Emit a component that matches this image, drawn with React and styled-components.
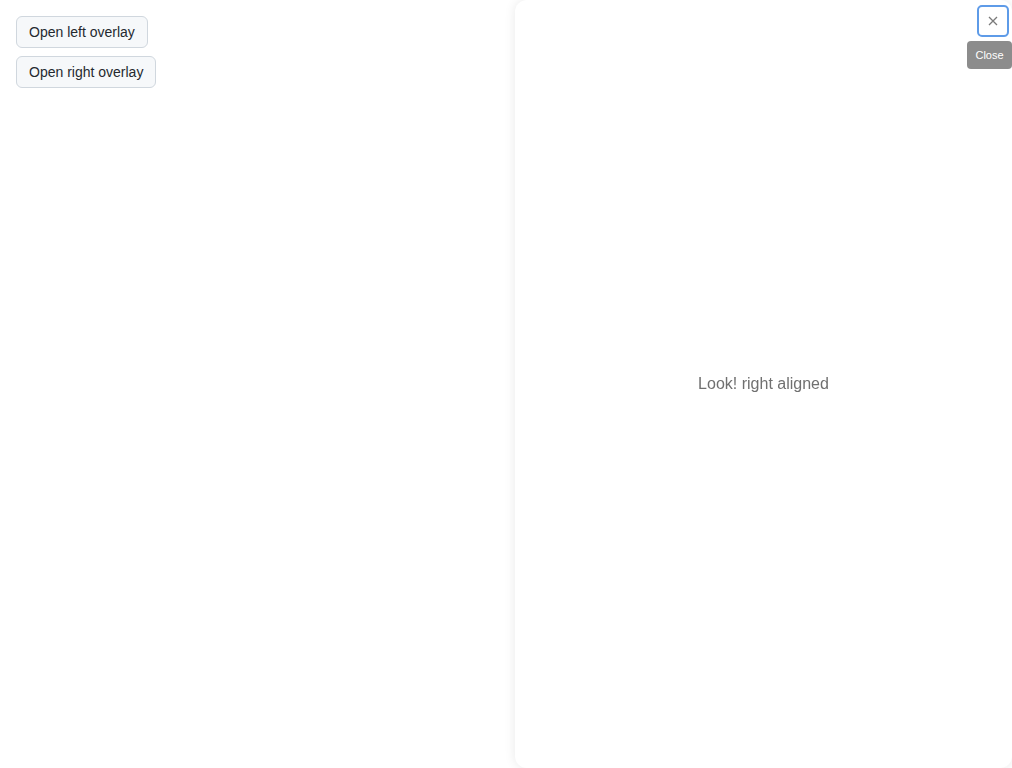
import styled, { createGlobalStyle } from 'styled-components';

const GlobalStyle = createGlobalStyle`
  body {
    margin: 0;
    background: #fff;
    font-family: 'Liberation Sans', Arial, sans-serif;
  }
`;

const Page = styled.div`
  display: flex;
  flex-direction: column;
  align-items: flex-start;
  gap: 8px;
  padding: 16px;
`;

const Button = styled.button`
  height: 32px;
  padding: 0 12px;
  background: #f6f8fa;
  border: 1px solid #d0d7de;
  border-radius: 6px;
  color: #24292f;
  font-family: 'Liberation Sans', Arial, sans-serif;
  font-size: 14px;
  cursor: pointer;
`;

const Drawer = styled.aside`
  position: fixed;
  top: 0;
  right: 0;
  bottom: 0;
  width: 497px;
  background: #fff;
  border-radius: 12px;
  box-shadow: 0 0 12px rgba(0, 0, 0, 0.09);
  display: flex;
  align-items: center;
  justify-content: center;
`;

const Message = styled.p`
  margin: 0;
  color: #707070;
  font-size: 16px;
`;

const CloseButton = styled.button`
  position: absolute;
  top: 5px;
  right: 3px;
  width: 32px;
  height: 32px;
  padding: 0;
  background: #fff;
  border: 2px solid #5e9be8;
  border-radius: 5px;
  display: flex;
  align-items: center;
  justify-content: center;
  cursor: pointer;
`;

const Tooltip = styled.span`
  position: absolute;
  top: 41px;
  right: 0;
  width: 45px;
  height: 28px;
  background: #8c8c8c;
  color: #fff;
  border-radius: 4px;
  font-size: 11px;
  display: flex;
  align-items: center;
  justify-content: center;
`;

export default function App() {
  return (
    <>
      <GlobalStyle />
      <Page>
        <Button>Open left overlay</Button>
        <Button>Open right overlay</Button>
      </Page>
      <Drawer>
        <CloseButton aria-label='Close'>
          <svg width='10' height='10' viewBox='0 0 10 10'>
            <path d='M1 1 L9 9 M9 1 L1 9' stroke='#7a7a7a' strokeWidth='1.3' />
          </svg>
        </CloseButton>
        <Tooltip>Close</Tooltip>
        <Message>Look! right aligned</Message>
      </Drawer>
    </>
  );
}
